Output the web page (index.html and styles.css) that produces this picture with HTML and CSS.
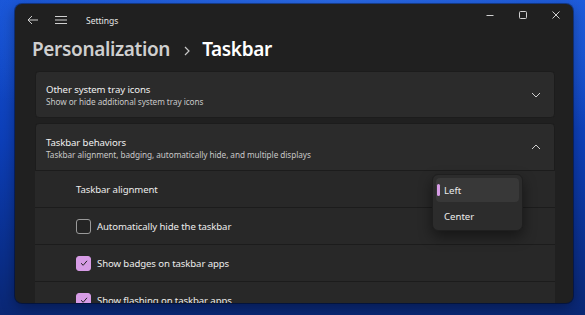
FILE: index.html
```html
<!DOCTYPE html>
<html>
<head>
<meta charset="utf-8">
<link rel="stylesheet" href="styles.css">
</head>
<body>
<div class="window">
  <div class="titlebar">
    <div class="tb-left">
      <svg class="ico-back" width="12" height="10" viewBox="0 0 12 10"><path d="M5 1 L1 5 L5 9 M1 5 H11" fill="none" stroke="#d0d0d0" stroke-width="1"/></svg>
      <svg class="ico-menu" width="12" height="10" viewBox="0 0 12 10"><path d="M0 1.5 H12 M0 5 H12 M0 8.5 H12" fill="none" stroke="#d0d0d0" stroke-width="1"/></svg>
      <span class="app-title">Settings</span>
    </div>
    <div class="tb-right">
      <svg width="10" height="10" viewBox="0 0 10 10"><path d="M1.5 5.5 H8.5" stroke="#d0d0d0" stroke-width="1"/></svg>
      <svg width="10" height="10" viewBox="0 0 10 10"><rect x="1.5" y="1.5" width="7" height="7" rx="1" fill="none" stroke="#d0d0d0" stroke-width="1"/></svg>
      <svg width="10" height="10" viewBox="0 0 10 10"><path d="M1.5 1.5 L8.5 8.5 M8.5 1.5 L1.5 8.5" stroke="#d0d0d0" stroke-width="1"/></svg>
    </div>
  </div>
  <h1 class="heading"><span class="crumb">Personalization</span><svg class="sep" width="6" height="10" viewBox="0 0 6 10"><path d="M1 1 L5 5 L1 9" fill="none" stroke="#c8c8c8" stroke-width="1.2"/></svg><span class="current">Taskbar</span></h1>
  <div class="content">
    <div class="card">
      <div class="card-text">
        <div class="card-title">Other system tray icons</div>
        <div class="card-sub">Show or hide additional system tray icons</div>
      </div>
      <svg class="chev" width="10" height="6" viewBox="0 0 10 6"><path d="M1 1 L5 5 L9 1" fill="none" stroke="#cfcfcf" stroke-width="1"/></svg>
    </div>
    <div class="expander">
      <div class="card head">
        <div class="card-text">
          <div class="card-title">Taskbar behaviors</div>
          <div class="card-sub">Taskbar alignment, badging, automatically hide, and multiple displays</div>
        </div>
        <svg class="chev" width="10" height="6" viewBox="0 0 10 6"><path d="M1 5 L5 1 L9 5" fill="none" stroke="#cfcfcf" stroke-width="1"/></svg>
      </div>
      <div class="row"><span class="row-label">Taskbar alignment</span></div>
      <div class="row"><span class="box"></span><span class="row-label">Automatically hide the taskbar</span></div>
      <div class="row"><span class="box on"><svg width="10" height="10" viewBox="0 0 10 10"><path d="M2 5.2 L4.2 7.3 L8 2.8" fill="none" stroke="#222" stroke-width="1"/></svg></span><span class="row-label">Show badges on taskbar apps</span></div>
      <div class="row"><span class="box on"><svg width="10" height="10" viewBox="0 0 10 10"><path d="M2 5.2 L4.2 7.3 L8 2.8" fill="none" stroke="#222" stroke-width="1"/></svg></span><span class="row-label">Show flashing on taskbar apps</span></div>
      <div class="menu">
        <div class="menu-item sel"><span class="pill"></span>Left</div>
        <div class="menu-item">Center</div>
      </div>
    </div>
  </div>
</div>
</body>
</html>
```
FILE: styles.css
```css
* { box-sizing: border-box; }
html, body { margin: 0; padding: 0; }
body {
  width: 585px;
  height: 315px;
  overflow: hidden;
  font-family: "Segoe UI", "Noto Sans", "Open Sans", sans-serif;
  background:
    radial-gradient(ellipse 420px 160px at 330px 0px, #2a6ae8 0%, rgba(30,90,220,0) 100%),
    linear-gradient(180deg, #1652d4 0%, #0d3fb8 45%, #0a2f8c 80%, #0a2774 100%);
  padding: 4px 0 0 15px;
}
.window {
  width: 558px;
  height: 299px;
  background: #202020;
  border-radius: 7px;
  overflow: hidden;
  display: flex;
  flex-direction: column;
  box-shadow: 0 0 0 1px rgba(0,0,0,0.35), 0 4px 14px rgba(0,0,0,0.35);
}
.titlebar {
  height: 32px;
  flex: none;
  display: flex;
  align-items: center;
  justify-content: space-between;
  padding: 0 0 0 12px;
}
.tb-left { display: flex; align-items: center; }
.ico-menu { margin-left: 16px; }
.app-title { margin-left: 19px; font-size: 8.5px; color: #e6e6e6; }
.tb-right { display: flex; align-items: center; gap: 23px; padding-right: 12px; margin-top: -10px; }
.heading {
  margin: 0 0 8px 0;
  padding: 0 0 0 17px;
  height: 27px;
  flex: none;
  font-size: 19px;
  font-weight: 600;
  line-height: 27px;
  display: flex;
  align-items: center;
  letter-spacing: -0.35px;
}
.crumb { color: #cfcfcf; }
.sep { margin: 2px 12px 0 14px; flex: none; }
.current { color: #ffffff; }
.content {
  padding: 0 18px 0 20px;
  display: flex;
  flex-direction: column;
  gap: 5px;
  flex: 1;
  overflow: hidden;
}
.card {
  background: #2b2b2b;
  border-radius: 4px;
  height: 47px;
  flex: none;
  display: flex;
  align-items: center;
  justify-content: space-between;
  padding: 0 13px 0 10px;
  border: 1px solid #1c1c1c;
}
.card-text { display: flex; flex-direction: column; margin-top: 2px; }
.card-title { font-size: 9.6px; color: #f0f0f0; line-height: 13px; letter-spacing: -0.1px; }
.card-sub { font-size: 8.2px; color: #c8c8c8; line-height: 12px; letter-spacing: -0.05px; }
.chev { flex: none; }
.expander { position: relative; display: flex; flex-direction: column; flex: none; }
.expander .card.head { border-radius: 4px 4px 0 0; height: 48px; }
.row {
  height: 37px;
  flex: none;
  background: #282828;
  border-bottom: 1px solid #1c1c1c;
  display: flex;
  align-items: center;
  padding-left: 41px;
  font-size: 9.6px;
  color: #ececec;
  letter-spacing: -0.1px;
}
.box {
  width: 15px;
  height: 15px;
  border: 1px solid #9a9a9a;
  border-radius: 3px;
  margin-right: 6px;
  background: #242424;
  display: flex;
  align-items: center;
  justify-content: center;
}
.box.on { background: #d79ce6; border-color: #d79ce6; }
.menu {
  position: absolute;
  left: 397px;
  top: 51px;
  width: 91px;
  height: 57px;
  background: #2c2c2c;
  border-radius: 6px;
  border: 1px solid #1f1f1f;
  box-shadow: 0 6px 14px rgba(0,0,0,0.45);
  padding: 3px 3px;
}
.menu-item {
  height: 24px;
  display: flex;
  align-items: center;
  padding-left: 8px;
  font-size: 9.6px;
  color: #ececec;
  border-radius: 4px;
  position: relative;
  margin-bottom: 2px;
}
.menu-item.sel { background: #383838; }
.pill {
  position: absolute;
  left: 1px;
  top: 6px;
  width: 3px;
  height: 12px;
  border-radius: 2px;
  background: #d79ce6;
}
```
